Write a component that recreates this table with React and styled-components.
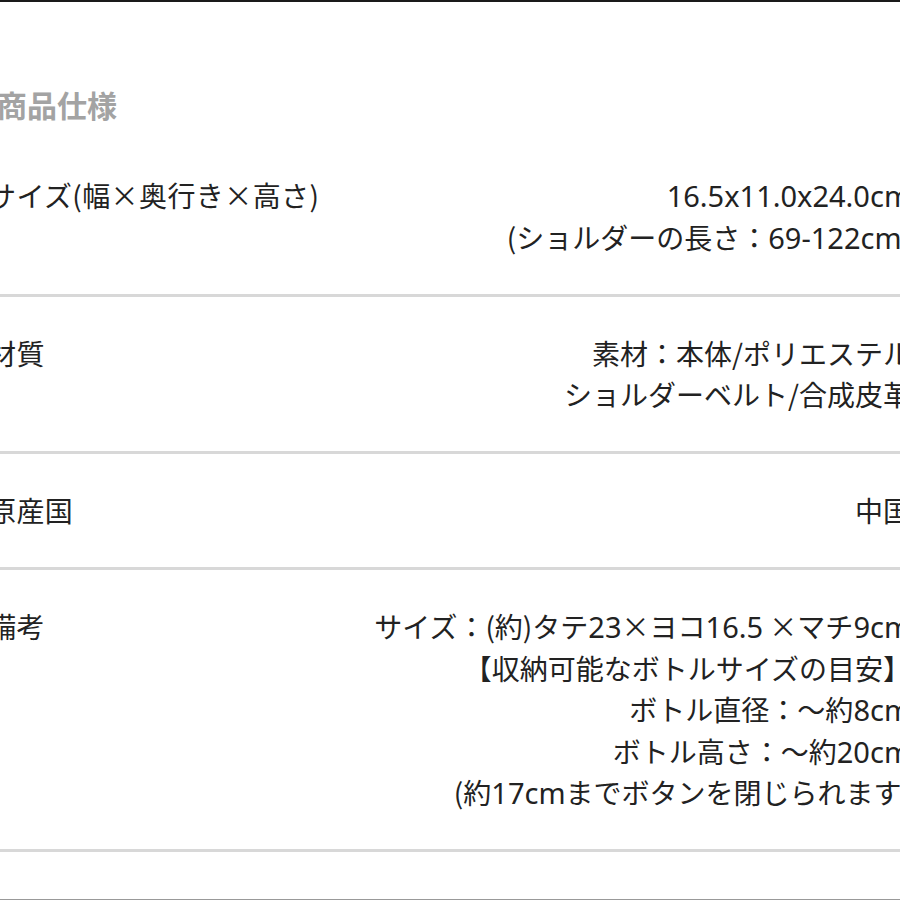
import React from 'react';
import styled, {createGlobalStyle} from 'styled-components';

const GlobalStyle = createGlobalStyle`
    html, body {
        margin: 0;
        padding: 0;
        background: #fff;
        overflow: hidden;
    }
    body {
        font-family: "Noto Sans CJK JP", "Noto Sans", sans-serif;
        color: #222;
    }
`;

const specs = [
    {label: "サイズ(幅×奥行き×高さ)", lines: ["16.5x11.0x24.0cm", "(ショルダーの長さ：69-122cm)"]},
    {label: "材質", lines: ["素材：本体/ポリエステル", "ショルダーベルト/合成皮革"]},
    {label: "原産国", lines: ["中国"]},
    {label: "備考", lines: [
        "サイズ：(約)タテ23×ヨコ16.5 ×マチ9cm",
        "【収納可能なボトルサイズの目安】",
        "ボトル直径：～約8cm",
        "ボトル高さ：～約20cm",
        "(約17cmまでボタンを閉じられます)",
    ]},
];

// digits and latin letters are set in a wider latin face, like the shot
function Text({children}) {
    const parts = children.split(/([0-9A-Za-z.\-]+)/);
    return parts.map((part, i) =>
        i % 2 === 1 ? <Latin key={i}>{part}</Latin> : part
    );
}

export default function App() {
    return (
        <>
            <GlobalStyle/>
            <Page>
                <Sheet>
                    <Title>商品仕様</Title>
                    {specs.map((spec) => (
                        <SpecRow key={spec.label}>
                            <Label>{spec.label}</Label>
                            <Value>
                                {spec.lines.map((line) => (
                                    <Line key={line}><Text>{line}</Text></Line>
                                ))}
                            </Value>
                        </SpecRow>
                    ))}
                </Sheet>
            </Page>
        </>
    );
}

const Page = styled.div`
    width: 900px;
    height: 900px;
    overflow: hidden;
    border-top: 2px solid #1a1a1a;
    border-bottom: 1px solid #999;
    box-sizing: border-box;
`;

// the shot is cropped: text runs a little past both edges
const Sheet = styled.div`
    width: 919px;
    margin-left: -8px;
`;

const Title = styled.h2`
    margin: 0;
    padding: 82px 0 0 5px;
    height: 137px;
    box-sizing: border-box;
    font-size: 30px;
    line-height: 40px;
    font-weight: 700;
    color: #a3a3a3;
`;

const SpecRow = styled.div`
    display: flex;
    justify-content: space-between;
    align-items: flex-start;
    padding: 36px 0 35.5px;
    border-bottom: 3px solid #d8d8d8;
    font-size: 28px;
    line-height: 41.5px;
`;

const Label = styled.div`
    margin-left: -4px;
    letter-spacing: 0.4px;
    white-space: nowrap;
`;

const Value = styled.div`
    display: flex;
    flex-direction: column;
    align-items: flex-end;
    text-align: right;
`;

const Line = styled.span`
    white-space: nowrap;
`;

const Latin = styled.span`
    font-family: "Noto Sans", "Open Sans", sans-serif;
    font-size: 29px;
    line-height: 1;
`;
